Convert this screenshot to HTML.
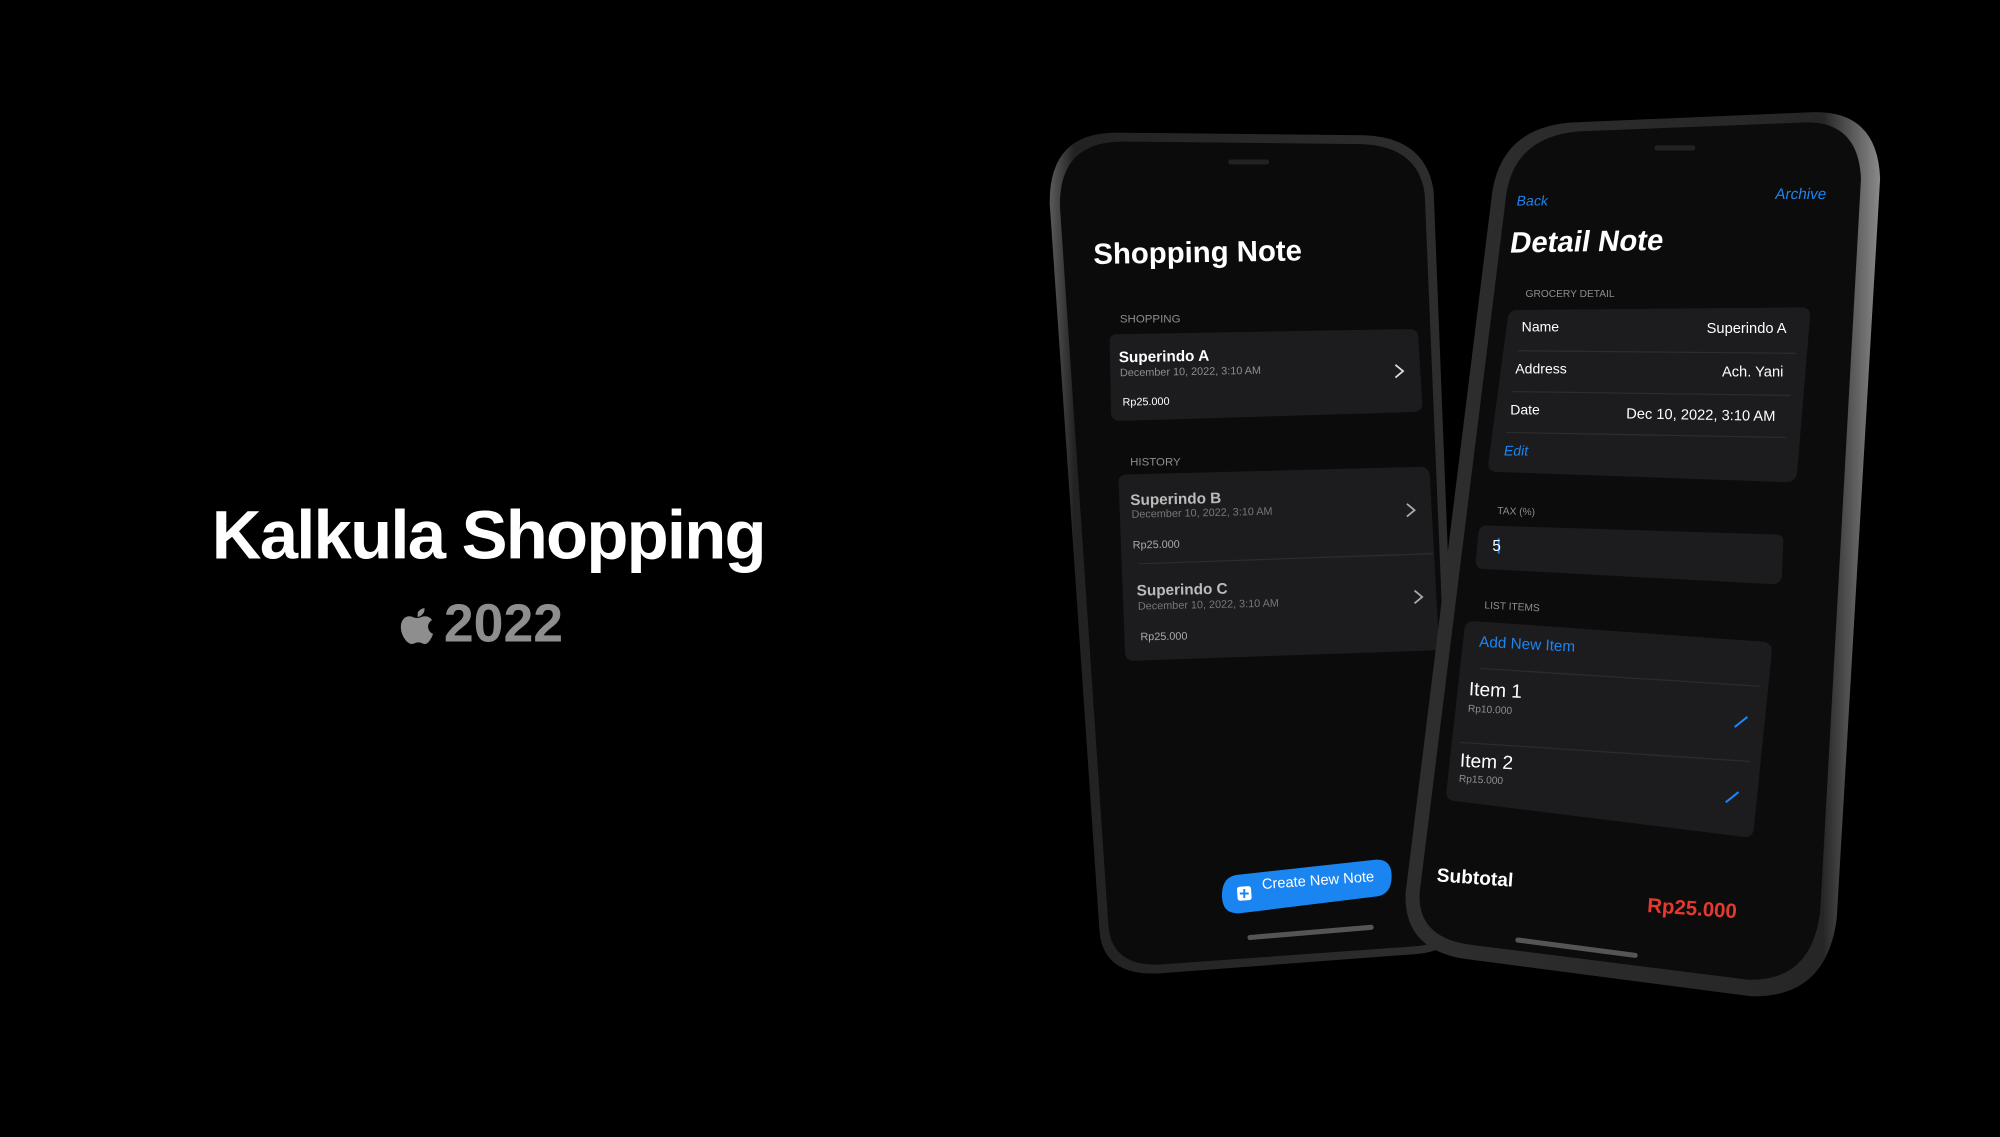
<!DOCTYPE html>
<html><head><meta charset="utf-8"><style>
html,body{margin:0;padding:0;background:#000;overflow:hidden}
#wrap{width:2000px;height:1137px;position:relative;overflow:hidden;background:#000}
#stage{position:absolute;left:0;top:0;width:1568px;height:891px;transform:scale(1.27551);transform-origin:0 0;font-family:"Liberation Sans",sans-serif}
.t{position:absolute;white-space:nowrap;transform-origin:0 0;line-height:1}
.w{color:#fff}.g{color:#8d8d92}.b{color:#1d84f0}
</style></head><body><div id="wrap"><div id="stage">

<div class="t w" style="left:166px;top:393px;font-size:54px;font-weight:bold;letter-spacing:-1.4px">Kalkula Shopping</div>
<div class="t" style="left:313px;top:468px;font-size:42px;font-weight:bold;color:#8e8e8e">
<svg width="28" height="34" viewBox="0 0 26 32" style="vertical-align:-3px;margin-right:7px"><path fill="#8e8e8e" d="M13.5 7.5c1.5-2 3.5-3 5-3 .2 2-.6 3.8-2 5-1.3 1.2-2.8 1.6-3 1.5-.3-1.4.1-2.4 0-3.5zM7 10.5c2.4 0 3.6 1.3 6 1.3s3.300-1.3 6-1.3c1.8 0 3.8 1 5 2.8-4.3 2.4-3.6 8.6.8 10.2-1.3 3.6-3.7 7.5-6 7.5-1.9 0-2.4-1.2-4.8-1.2s-3 1.2-4.9 1.2C5.6 31 1 24.6 1 18.5 1 13.5 4 10.5 7 10.5z"/></svg>2022</div>

<svg width="1568" height="891" style="position:absolute;left:0;top:0">
<defs>
<linearGradient id="fr1" x1="0" y1="0" x2="1" y2="0"><stop offset="0" stop-color="#5a5a5a"/><stop offset=".06" stop-color="#222"/><stop offset="1" stop-color="#2e2e2e"/></linearGradient>
<linearGradient id="fr2" x1="0" y1="0" x2="1" y2="0"><stop offset="0" stop-color="#2e2e2e"/><stop offset=".88" stop-color="#262626"/><stop offset="1" stop-color="#8a8a8a"/></linearGradient>
</defs>
<path d="M875,104 L1070,106 Q1118,108 1124,150 L1146,710 Q1148,745 1110,748 L910,763 Q865,766 862,730 L823,160 Q822,104 875,104 Z" fill="url(#fr1)"/>
<path d="M880,111 L1068,113 Q1112,115 1117,152 L1140,708 Q1142,740 1108,742 L912,756 Q872,759 869,726 L831,162 Q830,111 880,111 Z" fill="#0b0b0b"/>
<rect x="963" y="125" width="32" height="4" rx="2" fill="#222"/>
<path d="M876,262 L1105,258 Q1112,258 1112,265 L1115,316 Q1115,323 1108,323 L878,330 Q871,330 871,323 L870,268 Q870,262 876,262 Z" fill="#1c1c1e"/>
<path d="M883,372 L1113,366 Q1120,366 1121,373 L1128,503 Q1128,510 1121,510 L889,518 Q882,518 882,511 L877,378 Q877,372 883,372 Z" fill="#1c1c1e"/>
<line x1="893" y1="442" x2="1124" y2="434" stroke="#2c2c2e" stroke-width="1"/>
<path d="M1094,286 l6,5 l-6,5" fill="none" stroke="#ddd" stroke-width="1.4"/>
<path d="M1103,395 l6,5 l-6,5" fill="none" stroke="#aaa" stroke-width="1.4"/>
<path d="M1109,463 l6,5 l-6,5" fill="none" stroke="#aaa" stroke-width="1.4"/>
<path d="M969,686 L1078,674 Q1092,673 1091,689 Q1090,702 1078,703 L972,716 Q958,717 958,702 Q958,688 969,686 Z" fill="#1a84f0"/>
<rect x="970" y="695" width="11" height="11" rx="2" fill="#fff" transform="rotate(-4 975 700)"/>
<path d="M975.5,697 v7 M972,700.5 h7" stroke="#1a84f0" stroke-width="1.5"/>
<path d="M980,735 L1075,727" stroke="#555" stroke-width="4" stroke-linecap="round"/>
<path d="M1232,96 L1420,88 Q1472,86 1474,140 L1440,720 Q1432,783 1372,781 L1150,752 Q1100,745 1102,700 L1170,150 Q1178,100 1232,96 Z" fill="url(#fr2)"/>
<path d="M1238,103 L1415,96 Q1457,95 1459,140 L1427,715 Q1420,770 1370,768 L1155,741 Q1111,736 1113,700 L1181,152 Q1188,107 1238,103 Z" fill="#0c0c0c"/>
<rect x="1297" y="114" width="32" height="4" rx="2" fill="#222"/>
<path d="M1190,243 L1412,241 Q1420,241 1419,249 L1409,370 Q1408,378 1400,378 L1174,370 Q1166,370 1167,362 L1182,250 Q1183,243 1190,243 Z" fill="#1c1c1e"/>
<path d="M1190,275 L1408,277 M1186,307 L1404,310 M1181,339 L1400,343" stroke="#2c2c2e" stroke-width="1"/>
<path d="M1165,412 L1392,419 Q1399,419 1398,426 L1397,452 Q1396,458 1389,458 L1163,446 Q1157,446 1157,440 L1159,418 Q1160,412 1165,412 Z" fill="#1c1c1e"/>
<path d="M1156,487 L1382,503 Q1390,504 1389,512 L1375,650 Q1374,657 1366,656 L1140,628 Q1133,627 1134,620 L1148,494 Q1149,487 1156,487 Z" fill="#1c1c1e"/>
<path d="M1160,524 L1380,538 M1145,582 L1372,597" stroke="#2c2c2e" stroke-width="1"/>
<path d="M1360,570 L1370,562 M1353,629 L1363,621" stroke="#1d84f0" stroke-width="1.6"/>
<path d="M1175,422 L1175,434" stroke="#1d84f0" stroke-width="1.5"/>
<path d="M1190,737 L1282,749" stroke="#555" stroke-width="4" stroke-linecap="round"/>
</svg>

<div class="t w" style="left:857px;top:188px;font-size:23px;font-weight:bold;transform:rotate(-1deg)">Shopping Note</div>
<div class="t g" style="left:878px;top:246px;font-size:9px">SHOPPING</div>
<div class="t w" style="left:877px;top:274px;font-size:12px;font-weight:bold;transform:rotate(-1deg)">Superindo A</div>
<div class="t g" style="left:878px;top:288px;font-size:8.5px;transform:rotate(-1deg)">December 10, 2022, 3:10 AM</div>
<div class="t w" style="left:880px;top:311px;font-size:8.5px;transform:rotate(-1deg)">Rp25.000</div>
<div class="t g" style="left:886px;top:358px;font-size:9px">HISTORY</div>
<div class="t" style="left:886px;top:386px;font-size:12px;font-weight:bold;color:#bbb;transform:rotate(-1.3deg)">Superindo B</div>
<div class="t g" style="left:887px;top:399px;font-size:8.5px;color:#777;transform:rotate(-1.3deg)">December 10, 2022, 3:10 AM</div>
<div class="t" style="left:888px;top:423px;font-size:8.5px;color:#aaa;transform:rotate(-1deg)">Rp25.000</div>
<div class="t" style="left:891px;top:457px;font-size:12px;font-weight:bold;color:#bbb;transform:rotate(-1.3deg)">Superindo C</div>
<div class="t g" style="left:892px;top:471px;font-size:8.5px;color:#777;transform:rotate(-1.3deg)">December 10, 2022, 3:10 AM</div>
<div class="t" style="left:894px;top:495px;font-size:8.5px;color:#aaa;transform:rotate(-1deg)">Rp25.000</div>
<div class="t w" style="left:989px;top:689px;font-size:11.5px;transform:rotate(-4deg)">Create New Note</div>

<div class="t b" style="left:1190px;top:153px;font-size:11px;transform:skewX(-10deg)">Back</div>
<div class="t b" style="left:1393px;top:146px;font-size:12px;transform:skewX(-10deg)">Archive</div>
<div class="t w" style="left:1186px;top:179px;font-size:23px;font-weight:bold;transform:rotate(-1deg) skewX(-10deg)">Detail Note</div>
<div class="t g" style="left:1196px;top:227px;font-size:8px">GROCERY DETAIL</div>
<div class="t w" style="left:1193px;top:252px;font-size:11px">Name</div>
<div class="t w" style="left:1338px;top:253px;font-size:11.5px">Superindo A</div>
<div class="t w" style="left:1188px;top:285px;font-size:11px">Address</div>
<div class="t w" style="left:1350px;top:287px;font-size:11.5px">Ach. Yani</div>
<div class="t w" style="left:1184px;top:317px;font-size:11px">Date</div>
<div class="t w" style="left:1275px;top:320px;font-size:11.5px;transform:rotate(1deg)">Dec 10, 2022, 3:10 AM</div>
<div class="t b" style="left:1180px;top:349px;font-size:11px;transform:skewX(-10deg)">Edit</div>
<div class="t g" style="left:1174px;top:397px;font-size:8px;transform:rotate(2deg)">TAX (%)</div>
<div class="t w" style="left:1170px;top:422px;font-size:12px">5</div>
<div class="t g" style="left:1164px;top:471px;font-size:8px;transform:rotate(3deg)">LIST ITEMS</div>
<div class="t b" style="left:1160px;top:497px;font-size:12px;transform:rotate(3deg)">Add New Item</div>
<div class="t w" style="left:1152px;top:533px;font-size:15px;transform:rotate(3deg)">Item 1</div>
<div class="t g" style="left:1151px;top:552px;font-size:8px;transform:rotate(3deg)">Rp10.000</div>
<div class="t w" style="left:1145px;top:589px;font-size:15px;transform:rotate(3deg)">Item 2</div>
<div class="t g" style="left:1144px;top:607px;font-size:8px;transform:rotate(3deg)">Rp15.000</div>
<div class="t w" style="left:1127px;top:679px;font-size:15px;font-weight:bold;transform:rotate(4deg)">Subtotal</div>
<div class="t" style="left:1292px;top:703px;font-size:16px;font-weight:bold;color:#e5382e;transform:rotate(4deg)">Rp25.000</div>

</div></div></body></html>
